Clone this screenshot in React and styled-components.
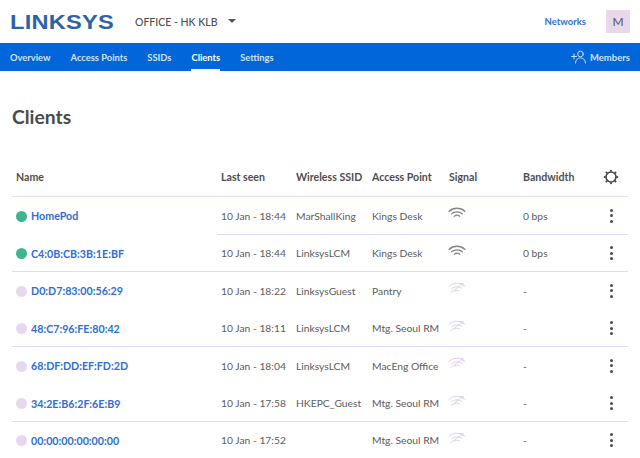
import React from 'react';
import styled, { createGlobalStyle } from 'styled-components';

const GlobalStyle = createGlobalStyle`
  html, body {
    background: #fff;
    color: #5c5c5c;
    font-family: Lato, 'Open Sans', sans-serif;
    height: 458px;
    margin: 0;
    overflow: hidden;
  }
`;

const TopBar = styled.header`
  align-items: center;
  display: flex;
  height: 43px;
  padding: 0 10px;
`;

const Logo = styled.div`
  color: #2d62a8;
  font-family: 'Liberation Sans', sans-serif;
  font-size: 20px;
  font-weight: 700;
  letter-spacing: 0.2px;
  line-height: 1;
  transform: scaleX(1.18);
  transform-origin: left center;
  width: 125px;
`;

const NetworkName = styled.div`
  color: #4e4e4e;
  font-size: 10.5px;
  font-weight: 500;
`;

const Caret = styled.span`
  border-left: 4px solid transparent;
  border-right: 4px solid transparent;
  border-top: 4px solid #555;
  margin-left: 10px;
  margin-top: -1px;
`;

const NetworksLink = styled.a`
  color: #2f6fd0;
  font-size: 9.5px;
  font-weight: 700;
  margin-left: auto;
`;

const Avatar = styled.div`
  align-items: center;
  background: #e8d8ea;
  color: #555;
  display: flex;
  font-size: 12px;
  height: 23px;
  justify-content: center;
  margin-left: 20px;
  width: 24px;
`;

const NavBar = styled.nav`
  align-items: stretch;
  background: #0066d9;
  display: flex;
  gap: 20px;
  height: 28px;
  padding: 0 10px;
`;

const NavItem = styled.a`
  align-items: center;
  border-bottom: 2px solid ${props => (props.$active ? '#fff' : 'transparent')};
  color: ${props => (props.$active ? '#fff' : '#cfe2f8')};
  display: flex;
  font-size: 9.35px;
  font-weight: 700;
  padding-top: 2px;
`;

const MembersLink = styled(NavItem)`
  font-size: 9.5px;
  gap: 4px;
  margin-left: auto;
`;

const Title = styled.h1`
  color: #4a4a4a;
  font-size: 19.3px;
  font-weight: 700;
  line-height: 26px;
  margin: 33px 0 28px 12px;
`;

const Table = styled.div`
  margin: 0 12px;
`;

const Row = styled.div`
  display: grid;
  grid-template-columns: 205px 75px 76px 77px 74px 81px 28px;
  height: ${props => props.$height}px;
`;

const Cell = styled.div`
  align-items: center;
  border-bottom: 1px solid ${props => (props.$line ? '#e8d8ee' : 'transparent')};
  display: flex;
  font-size: 10.3px;
  min-width: 0;
  padding-left: 4px;
  white-space: nowrap;
`;

const HeadCell = styled(Cell)`
  color: #4e4e4e;
  font-size: 10.6px;
  font-weight: 700;
`;

const ActionCell = styled(Cell)`
  justify-content: center;
  padding-left: 0;
  padding-right: 6px;
`;

const Dot = styled.span`
  background: ${props => (props.$online ? '#3eb68d' : '#e8d8ee')};
  border-radius: 50%;
  flex: none;
  height: 11px;
  margin: 1px 4px 0 0;
  width: 11px;
`;

const ClientLink = styled.a`
  color: #2f6fd0;
  font-size: 10.7px;
  font-weight: 700;
`;

const SignalIcon = styled.svg`
  display: block;
  margin: -5px 0 0 -1px;
`;

const MenuButton = styled.div`
  display: flex;
  flex-direction: column;
  gap: 2.5px;

  span {
    background: #4a4a55;
    border-radius: 50%;
    height: 3px;
    width: 3px;
  }
`;

const clients = [
  { name: 'HomePod', seen: '10 Jan - 18:44', ssid: 'MarShallKing', ap: 'Kings Desk', bw: '0 bps', online: true, height: 38, line: 'partial' },
  { name: 'C4:0B:CB:3B:1E:BF', seen: '10 Jan - 18:44', ssid: 'LinksysLCM', ap: 'Kings Desk', bw: '0 bps', online: true, height: 37, line: 'full' },
  { name: 'D0:D7:83:00:56:29', seen: '10 Jan - 18:22', ssid: 'LinksysGuest', ap: 'Pantry', bw: '-', height: 38 },
  { name: '48:C7:96:FE:80:42', seen: '10 Jan - 18:11', ssid: 'LinksysLCM', ap: 'Mtg. Seoul RM', bw: '-', height: 37, line: 'full' },
  { name: '68:DF:DD:EF:FD:2D', seen: '10 Jan - 18:04', ssid: 'LinksysLCM', ap: 'MacEng Office', bw: '-', height: 38 },
  { name: '34:2E:B6:2F:6E:B9', seen: '10 Jan - 17:58', ssid: 'HKEPC_Guest', ap: 'Mtg. Seoul RM', bw: '-', height: 37, line: 'full' },
  { name: '00:00:00:00:00:00', seen: '10 Jan - 17:52', ssid: '', ap: 'Mtg. Seoul RM', bw: '-', height: 37 },
];

const WifiIcon = ({ online }) => (
  <SignalIcon
    width="18"
    height="12"
    viewBox="0 0 18 12"
    fill="none"
    stroke={online ? '#858585' : '#e2cfea'}
    strokeWidth={online ? 1.3 : 1}
    strokeLinecap="round"
    strokeDasharray={online ? undefined : '1.8 0.6'}
  >
    <path d="M1 4.400C5.500 .2 12.500 .2 17 4.400" />
    <path d="M3.600 6.800C6.600 4.200 11.400 4.200 14.400 6.800" />
    <path d="M6.200 9.200C7.800 7.900 10.200 7.900 11.800 9.200" />
    {!online && <path d="M3 10.500 15 1.500M11 1.500h4V4.500" />}
  </SignalIcon>
);

const GearIcon = () => (
  <svg width="16" height="16" viewBox="0 0 16 16" fill="none" stroke="#444">
    <circle cx="8" cy="8" r="5" strokeWidth="1.6" />
    <path
      strokeWidth="2"
      strokeLinecap="round"
      d="M8 1.700v.1M8 14.200v.1M3.500 3.500l.1.1M12.400 12.400l.1.1M3.500 12.500l.1-.1M12.400 3.600l.1-.1M1.700 8h.1M14.200 8h.1"
    />
  </svg>
);

const MembersIcon = () => (
  <svg width="15" height="14" viewBox="0 0 15 14" fill="none" stroke="#cfe2f8" strokeWidth="1" strokeLinecap="round">
    <circle cx="9.500" cy="4" r="2.800" />
    <path d="M4.500 13c.3-3.500 2.200-5 5-5s4.700 1.500 5 5M.5 6.500h5M3 4v5" />
  </svg>
);

const App = () => (
  <>
    <GlobalStyle />
    <TopBar>
      <Logo>LINKSYS</Logo>
      <NetworkName>OFFICE - HK KLB</NetworkName>
      <Caret />
      <NetworksLink>Networks</NetworksLink>
      <Avatar>M</Avatar>
    </TopBar>
    <NavBar>
      <NavItem>Overview</NavItem>
      <NavItem>Access Points</NavItem>
      <NavItem>SSIDs</NavItem>
      <NavItem $active>Clients</NavItem>
      <NavItem>Settings</NavItem>
      <MembersLink>
        <MembersIcon />
        Members
      </MembersLink>
    </NavBar>
    <main>
      <Title>Clients</Title>
      <Table>
        <Row $height={39}>
          <HeadCell $line>Name</HeadCell>
          <HeadCell $line>Last seen</HeadCell>
          <HeadCell $line>Wireless SSID</HeadCell>
          <HeadCell $line>Access Point</HeadCell>
          <HeadCell $line>Signal</HeadCell>
          <HeadCell $line>Bandwidth</HeadCell>
          <ActionCell $line>
            <GearIcon />
          </ActionCell>
        </Row>
        {clients.map(client => (
          <Row key={client.name} $height={client.height}>
            <Cell $line={client.line === 'full'}>
              <Dot $online={client.online} />
              <ClientLink>{client.name}</ClientLink>
            </Cell>
            <Cell $line={client.line}>{client.seen}</Cell>
            <Cell $line={client.line}>{client.ssid}</Cell>
            <Cell $line={client.line}>{client.ap}</Cell>
            <Cell $line={client.line}>
              <WifiIcon online={client.online} />
            </Cell>
            <Cell $line={client.line}>{client.bw}</Cell>
            <ActionCell $line={client.line}>
              <MenuButton>
                <span />
                <span />
                <span />
              </MenuButton>
            </ActionCell>
          </Row>
        ))}
      </Table>
    </main>
  </>
);

export default App;
